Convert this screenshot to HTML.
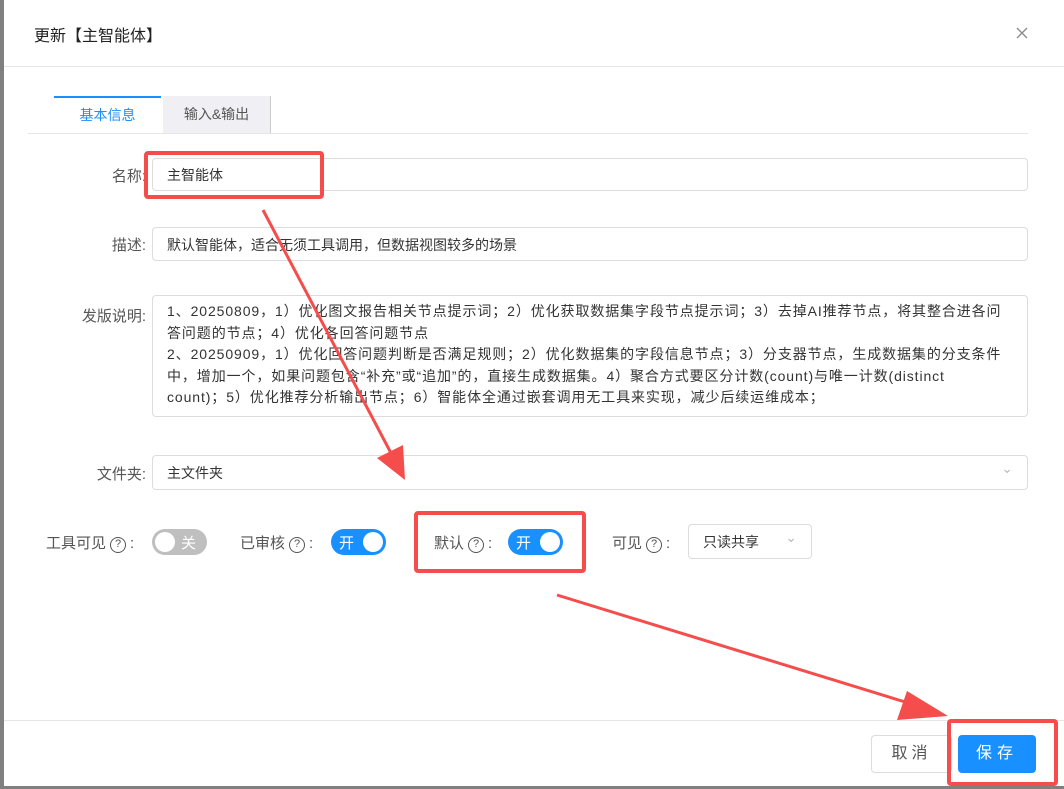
<!DOCTYPE html>
<html><head><meta charset="utf-8"><style>
*{box-sizing:border-box;margin:0;padding:0}
body{width:1064px;height:789px;background:#808080;font-family:"Liberation Sans","Noto Sans CJK SC",sans-serif;position:relative;overflow:hidden;color:#333}
.dlg{position:absolute;left:4px;top:0;width:1060px;height:786px;background:#fff}
.abs{position:absolute}
.title{left:30px;top:22px;font-size:16px;color:#222}
.hl{height:1px;background:#e6e6e6}
.lbl{font-size:15px;color:#555;text-align:right;white-space:nowrap}
.inp{border:1px solid #dcdcdc;border-radius:4px;background:#fff;font-size:14px;color:#333}
.sw{height:26px;border-radius:13px;font-size:15px;color:#fff}
.knob{position:absolute;top:3px;width:20px;height:20px;border-radius:50%;background:#fff}
.q{display:inline-block;width:16px;height:16px;border:1.4px solid #555;border-radius:50%;font-size:11px;line-height:13px;text-align:center;vertical-align:1px;margin:0 4px}
</style></head><body>
<div class="dlg">
<div class="abs title">更新【主智能体】</div>
<svg class="abs" style="left:1012px;top:27px" width="12" height="12"><path d="M1 1L11 11M11 1L1 11" stroke="#888" stroke-width="1.3"/></svg>
<div class="abs hl" style="left:0;top:66px;width:1060px"></div>
<div class="abs" style="left:50px;top:96px;width:107px;height:38px;border-top:2px solid #1890ff;color:#1890ff;font-size:14px;text-align:center;line-height:34px">基本信息</div>
<div class="abs" style="left:159px;top:96px;width:108px;height:38px;background:#f0f0f4;color:#555;font-size:14px;text-align:center;line-height:36px;border-right:1px solid #ccc">输入&amp;输出</div>
<div class="abs hl" style="left:24px;top:133px;width:1000px"></div>

<div class="abs lbl" style="left:40px;top:165px;width:102px">名称:</div>
<div class="abs inp" style="left:148px;top:158px;width:876px;height:33px;padding:6px 14px">主智能体</div>
<div class="abs lbl" style="left:40px;top:234px;width:102px">描述:</div>
<div class="abs inp" style="left:148px;top:227px;width:876px;height:34px;padding:7px 14px">默认智能体，适合无须工具调用，但数据视图较多的场景</div>
<div class="abs lbl" style="left:40px;top:305px;width:102px">发版说明:</div>
<div class="abs inp" style="left:148px;top:295px;width:876px;height:122px;padding:5px 14px 0 14px;line-height:21.5px;overflow:hidden;white-space:nowrap;letter-spacing:0.9px">1、20250809，1）优化图文报告相关节点提示词；2）优化获取数据集字段节点提示词；3）去掉AI推荐节点，将其整合进各问<br>答问题的节点；4）优化各回答问题节点<br>2、20250909，1）优化回答问题判断是否满足规则；2）优化数据集的字段信息节点；3）分支器节点，生成数据集的分支条件<br>中，增加一个，如果问题包含“补充”或“追加”的，直接生成数据集。4）聚合方式要区分计数(count)与唯一计数(distinct<br>count)；5）优化推荐分析输出节点；6）智能体全通过嵌套调用无工具来实现，减少后续运维成本；</div>
<div class="abs lbl" style="left:40px;top:463px;width:102px">文件夹:</div>
<div class="abs inp" style="left:148px;top:455px;width:876px;height:35px;padding:7px 14px">主文件夹<span style="position:absolute;right:14px;top:4px;color:#bbb">⌄</span></div>

<div class="abs lbl" style="left:42px;top:532px;text-align:left">工具可见<span class="q">?</span>:</div>
<div class="abs sw" style="left:148px;top:529px;width:55px;background:#bfbfbf"><div class="knob" style="left:3px"></div><span class="abs" style="left:29px;top:3px">关</span></div>
<div class="abs lbl" style="left:236px;top:532px;text-align:left">已审核<span class="q">?</span>:</div>
<div class="abs sw" style="left:327px;top:529px;width:55px;background:#1890ff"><span class="abs" style="left:8px;top:3px">开</span><div class="knob" style="left:32px"></div></div>
<div class="abs lbl" style="left:430px;top:532px;text-align:left">默认<span class="q">?</span>:</div>
<div class="abs sw" style="left:504px;top:529px;width:55px;background:#1890ff"><span class="abs" style="left:8px;top:3px">开</span><div class="knob" style="left:32px"></div></div>
<div class="abs lbl" style="left:608px;top:532px;text-align:left">可见<span class="q">?</span>:</div>
<div class="abs inp" style="left:684px;top:524px;width:124px;height:35px;padding:7px 14px;font-size:14px">只读共享<span style="position:absolute;right:14px;top:4px;color:#bbb">⌄</span></div>

<div class="abs hl" style="left:0;top:720px;width:1060px"></div>
<div class="abs inp" style="left:867px;top:735px;width:81px;height:38px;font-size:16px;text-align:center;line-height:36px;color:#555;letter-spacing:4px">取消</div>
<div class="abs" style="left:954px;top:735px;width:78px;height:38px;background:#1890ff;border-radius:4px;color:#fff;font-size:16px;text-align:center;line-height:38px;letter-spacing:5px">保存</div>
</div>
<svg class="abs" style="left:0;top:0" width="1064" height="789">
<g fill="none" stroke="#f54c4c" stroke-width="4">
<rect x="146" y="153" width="176" height="44" rx="2"/>
<rect x="416" y="513" width="168" height="58" rx="2"/>
<rect x="949" y="721" width="107" height="63" rx="2"/>
</g>
<g stroke="#f54c4c" stroke-width="3"><line x1="263" y1="210" x2="392" y2="455"/><line x1="557" y1="595" x2="915" y2="705"/></g>
<polygon fill="#f54c4c" points="405,480 377,458 403,445"/>
<polygon fill="#f54c4c" points="948,716 907,691 897,720"/>
</svg>
</body></html>
